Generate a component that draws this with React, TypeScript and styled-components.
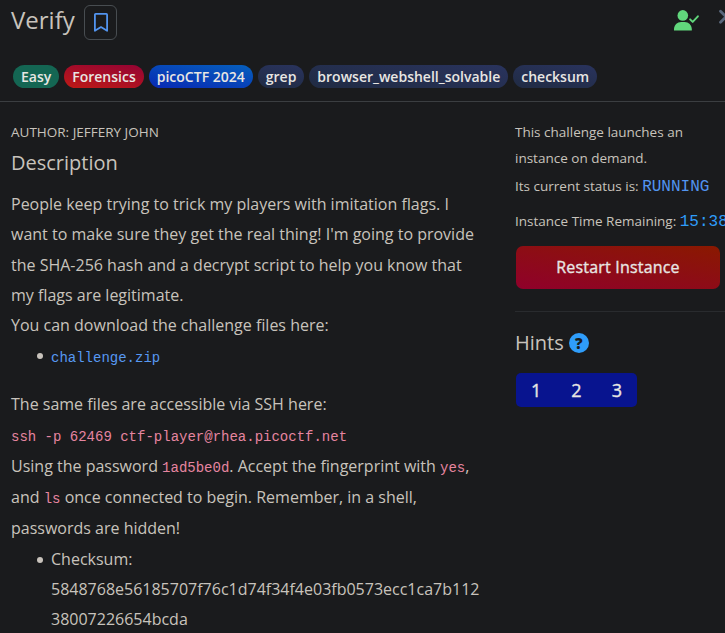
import React from 'react';
import styled, { createGlobalStyle } from 'styled-components';

const GlobalStyle = createGlobalStyle`
  * { box-sizing: border-box; }
  html, body { margin: 0; background: #1a1b1d; overflow: hidden; }
  body { font: 16px/30.4px "Open Sans", sans-serif; color: #c8c3bc; }
`;

const Modal = styled.div`
  width: 725px;
  height: 633px;
  overflow: hidden;
  background: #1a1b1d;
`;

const Header = styled.header`
  height: 102px;
  border-bottom: 1px solid #3b3e41;
`;

const TitleRow = styled.div`
  display: flex;
  align-items: flex-start;
  height: 65px;
  padding: 5px 0 0 11px;
`;

const Title = styled.h1`
  margin: 0 9px 0 0;
  font-size: 24px;
  font-weight: 400;
  line-height: 29px;
`;

const BookmarkButton = styled.button`
  display: flex;
  align-items: center;
  justify-content: center;
  width: 33px;
  height: 35px;
  padding: 0 0 0 1px;
  border: 1px solid #484d51;
  border-radius: 6px;
  background: transparent;
`;

const HeaderActions = styled.div`
  display: flex;
  flex: none;
  gap: 19px;
  margin-left: auto;
  margin-right: -8px;
  padding-top: 3px;
`;

const Tags = styled.div`
  display: flex;
  gap: 5px;
  padding-left: 13px;
`;

const Tag = styled.span<{ $fill: string }>`
  height: 23px;
  padding: 0 8px;
  border-radius: 12px;
  background: ${(p) => p.$fill};
  color: #e8e6e3;
  font-size: 14px;
  font-weight: 600;
  line-height: 23px;
  white-space: nowrap;
`;

const Columns = styled.main`
  display: flex;
`;

const Details = styled.section`
  width: 504px;
  padding: 17px 20px 0 11px;
`;

const Author = styled.div`
  font-size: 13.5px;
  line-height: 26px;
`;

const Heading = styled.h2`
  display: flex;
  align-items: center;
  gap: 5px;
  margin: 0;
  font-size: 20px;
  font-weight: 400;
  line-height: 24px;
`;

const DescriptionHeading = styled(Heading)`
  margin: 6px 0 14px;
`;

const Line = styled.div<{ $height?: number }>`
  height: ${(p) => p.$height ?? 30.25}px;
  line-height: ${(p) => p.$height ?? 30.25}px;
  white-space: nowrap;
`;

const List = styled.ul<{ $gap?: number }>`
  margin: 0 0 ${(p) => p.$gap ?? 0}px;
  padding: 0;
  list-style: none;
`;

const Item = styled.li`
  display: flex;
`;

const Bullet = styled.span`
  width: 6px;
  height: 6px;
  margin: 13px 8px 0 26px;
  border-radius: 50%;
  background: #c8c3bc;
`;

const Code = styled.code`
  color: #e685a0;
  font: 14px "Liberation Mono", monospace;
`;

const FileLink = styled(Code).attrs({ as: 'a' })`
  color: #5798f2;
`;

const Sidebar = styled.aside`
  width: 221px;
  padding: 17px 0 0 11px;
  font-size: 13.5px;
  line-height: 26px;
  white-space: nowrap;
`;

const Status = styled.div`
  height: 35px;
  line-height: 30px;
`;

const Mono = styled.span<{ $color: string }>`
  color: ${(p) => p.$color};
  font: 16px "Liberation Mono", monospace;
`;

const RestartButton = styled.button`
  display: block;
  width: 204px;
  height: 43px;
  margin: 5px 0 22px 1px;
  padding: 0 0 2px;
  border: 0;
  border-radius: 7px;
  background: linear-gradient(10deg, #90002b, #8a1900);
  color: #e8e6e3;
  font: 400 16px "Open Sans", sans-serif;
  letter-spacing: 0.2px;
  -webkit-text-stroke: 0.35px currentColor;
`;

const HintsHeading = styled(Heading)`
  padding-top: 19px;
  border-top: 1px solid #292b2e;
`;

const HelpBadge = styled.span`
  width: 20px;
  height: 20px;
  border-radius: 50%;
  background: #2f9dfa;
  color: #1a1b1d;
  font-size: 15px;
  font-weight: 800;
  line-height: 20px;
  text-align: center;
`;

const HintGroup = styled.div`
  display: flex;
  width: 121px;
  height: 34px;
  margin: 18px 0 0 1px;
  border-radius: 5px;
  overflow: hidden;
  background: #08148f;
`;

const HintButton = styled.button`
  flex: 1;
  padding: 0;
  border: 0;
  background: transparent;
  color: #e8e6e3;
  font: 400 18px/34px "Open Sans", sans-serif;
  -webkit-text-stroke: 0.35px currentColor;
`;

const NAVY = 'linear-gradient(10deg, #202b43, #29335d)';

const TAGS = [
  { label: 'Easy', fill: '#146653' },
  { label: 'Forensics', fill: 'linear-gradient(10deg, #bd1a16, #940334)' },
  { label: 'picoCTF 2024', fill: 'linear-gradient(10deg, #0828b3, #0660bd)' },
  { label: 'grep', fill: NAVY },
  { label: 'browser_webshell_solvable', fill: NAVY },
  { label: 'checksum', fill: NAVY },
];

const Bookmark = () => (
  <svg width="14" height="19" viewBox="0 0 14 19" fill="none" stroke="#5294ef" strokeWidth="1.8" strokeLinejoin="round">
    <path d="M.9 1.7Q.9.9 1.7.9h10.6q.8 0 .8.8v16.1L7 14.1.9 17.8z" />
  </svg>
);

const UserCheck = () => (
  <svg width="26" height="23" viewBox="0 0 26 23">
    <circle cx="8.8" cy="7.4" r="5.3" fill="#61d77c" />
    <path d="M0 22.6v-1.4C0 17.2 3.2 14 7.2 14h3.4c4 0 7.2 3.2 7.2 7.2v1.4z" fill="#61d77c" />
    <path d="m16.1 11.3 2.6 2.6 5.2-5.6" fill="none" stroke="#61d77c" strokeWidth="1.9" strokeLinecap="round" strokeLinejoin="round" />
  </svg>
);

const Close = () => (
  <svg width="14" height="18" viewBox="0 0 14 18" fill="none" stroke="#59677c" strokeWidth="2.8" strokeLinecap="round">
    <path d="m1.5 3.2 11 11m0-11-11 11" />
  </svg>
);

export default function App() {
  return (
    <>
      <GlobalStyle />
      <Modal>
        <Header>
          <TitleRow>
            <Title>Verify</Title>
            <BookmarkButton aria-label="Bookmark"><Bookmark /></BookmarkButton>
            <HeaderActions><UserCheck /><Close /></HeaderActions>
          </TitleRow>
          <Tags>
            {TAGS.map((t) => <Tag key={t.label} $fill={t.fill}>{t.label}</Tag>)}
          </Tags>
        </Header>
        <Columns>
          <Details>
            <Author>AUTHOR: JEFFERY JOHN</Author>
            <DescriptionHeading>Description</DescriptionHeading>
            <Line>People keep trying to trick my players with imitation flags. I</Line>
            <Line>want to make sure they get the real thing! I'm going to provide</Line>
            <Line>the SHA-256 hash and a decrypt script to help you know that</Line>
            <Line>my flags are legitimate.</Line>
            <Line>You can download the challenge files here:</Line>
            <List $gap={16}>
              <Item><Bullet /><Line $height={33}><FileLink>challenge.zip</FileLink></Line></Item>
            </List>
            <Line $height={31}>The same files are accessible via SSH here:</Line>
            <Line $height={30.5}><Code>ssh -p 62469 ctf-player@rhea.picoctf.net</Code></Line>
            <Line $height={30.75}>Using the password <Code>1ad5be0d</Code>. Accept the fingerprint with <Code>yes</Code>,</Line>
            <Line $height={31}>and <Code>ls</Code> once connected to begin. Remember, in a shell,</Line>
            <Line $height={31}>passwords are hidden!</Line>
            <List>
              <Item>
                <Bullet />
                <div>
                  <Line>Checksum:</Line>
                  <Line>5848768e56185707f76c1d74f34f4e03fb0573ecc1ca7b112</Line>
                  <Line>38007226654bcda</Line>
                </div>
              </Item>
            </List>
          </Details>
          <Sidebar>
            <div>This challenge launches an</div>
            <div>instance on demand.</div>
            <Status>Its current status is: <Mono $color="#5294ef">RUNNING</Mono></Status>
            <Status>Instance Time Remaining: <Mono $color="#2f9dfa">15:38</Mono></Status>
            <RestartButton>Restart Instance</RestartButton>
            <HintsHeading>Hints <HelpBadge>?</HelpBadge></HintsHeading>
            <HintGroup>
              {[1, 2, 3].map((n) => <HintButton key={n}>{n}</HintButton>)}
            </HintGroup>
          </Sidebar>
        </Columns>
      </Modal>
    </>
  );
}
